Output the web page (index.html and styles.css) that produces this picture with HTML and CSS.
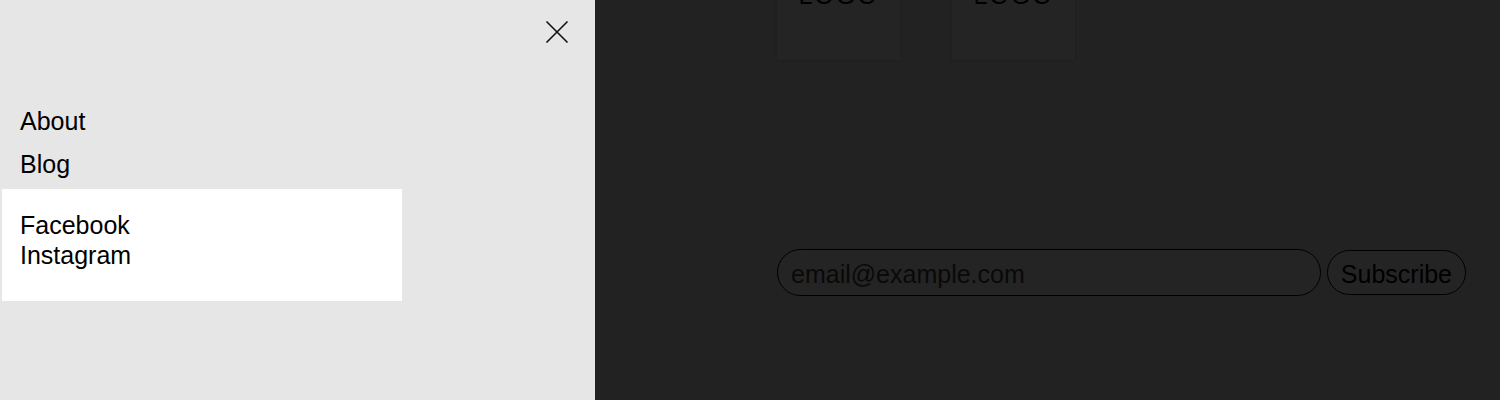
FILE: index.html
```html
<!DOCTYPE html>
<html lang="en">
<head>
<meta charset="utf-8">
<title>Menu</title>
<link rel="stylesheet" href="styles.css">
</head>
<body>
<main class="page">
  <div class="logos">
    <div class="logo-box"><span>LOGO</span></div>
    <div class="logo-box"><span>LOGO</span></div>
  </div>
  <form class="subscribe">
    <input class="email" type="email" placeholder="email@example.com">
    <button class="btn" type="button">Subscribe</button>
  </form>
</main>
<div class="overlay"></div>
<aside class="drawer">
  <div class="drawer-head">
    <button class="close" type="button" aria-label="Close">
      <svg width="24" height="24" viewBox="0 0 24 24"><path d="M1.5 1.5 L22.5 22.5 M22.5 1.5 L1.5 22.5" stroke="#111" stroke-width="1.6" fill="none"/></svg>
    </button>
  </div>
  <nav class="nav">
    <a href="#">About</a>
    <a href="#">Blog</a>
  </nav>
  <div class="social">
    <a href="#">Facebook</a>
    <a href="#">Instagram</a>
  </div>
</aside>
</body>
</html>
```
FILE: styles.css
```css
html, body {
  margin: 0;
  padding: 0;
  height: 400px;
  overflow: hidden;
}
body {
  font-family: "Liberation Sans", Arial, sans-serif;
  background: #f0f0f0;
  color: #000;
}
.page {
  padding-left: 777px;
  padding-right: 34px;
}
.logos {
  display: flex;
  gap: 52px;
  margin-top: -63px;
}
.logo-box {
  width: 123px;
  height: 123px;
  background: #fff;
  box-shadow: 0 0 4px rgba(0,0,0,0.2);
  display: flex;
  align-items: center;
  justify-content: center;
  font-size: 25px;
  color: #000;
}
.logo-box span {
  position: relative;
  top: -3px;
  letter-spacing: 2px;
}
.subscribe {
  display: flex;
  align-items: center;
  gap: 6px;
  margin-top: 189px;
}
.email {
  flex: 1;
  height: 47px;
  box-sizing: border-box;
  border: 1px solid #000;
  border-radius: 24px;
  padding: 3px 13px 0;
  font-family: "Liberation Sans", Arial, sans-serif;
  font-size: 25px;
  background: #fff;
  outline: none;
}
.email::placeholder {
  color: #444;
}
.btn {
  height: 45px;
  box-sizing: border-box;
  border: 1px solid #000;
  border-radius: 23px;
  padding: 3px 13px 0;
  font-family: "Liberation Sans", Arial, sans-serif;
  font-size: 25px;
  background: #fff;
  color: #000;
}
.overlay {
  position: absolute;
  inset: 0;
  background: rgba(0,0,0,0.858);
}
.drawer {
  position: absolute;
  top: 0;
  left: 0;
  bottom: 0;
  width: 595px;
  background: #e6e6e6;
  display: flex;
  flex-direction: column;
}
.drawer-head {
  display: flex;
  justify-content: flex-end;
  padding: 20px 26px 0 0;
  height: 87px;
  box-sizing: border-box;
}
.close {
  border: 0;
  background: none;
  padding: 0;
  width: 24px;
  height: 24px;
  cursor: pointer;
}
.close svg { display: block; }
.nav {
  display: flex;
  flex-direction: column;
  gap: 13px;
  padding-left: 20px;
  margin-top: 19px;
}
.nav a, .social a {
  color: #000;
  text-decoration: none;
  font-size: 25px;
  line-height: 30px;
}
.social {
  margin-top: 10px;
  margin-left: 2px;
  width: 400px;
  background: #fff;
  display: flex;
  flex-direction: column;
  padding: 21px 18px 31px;
  box-sizing: border-box;
}
```
